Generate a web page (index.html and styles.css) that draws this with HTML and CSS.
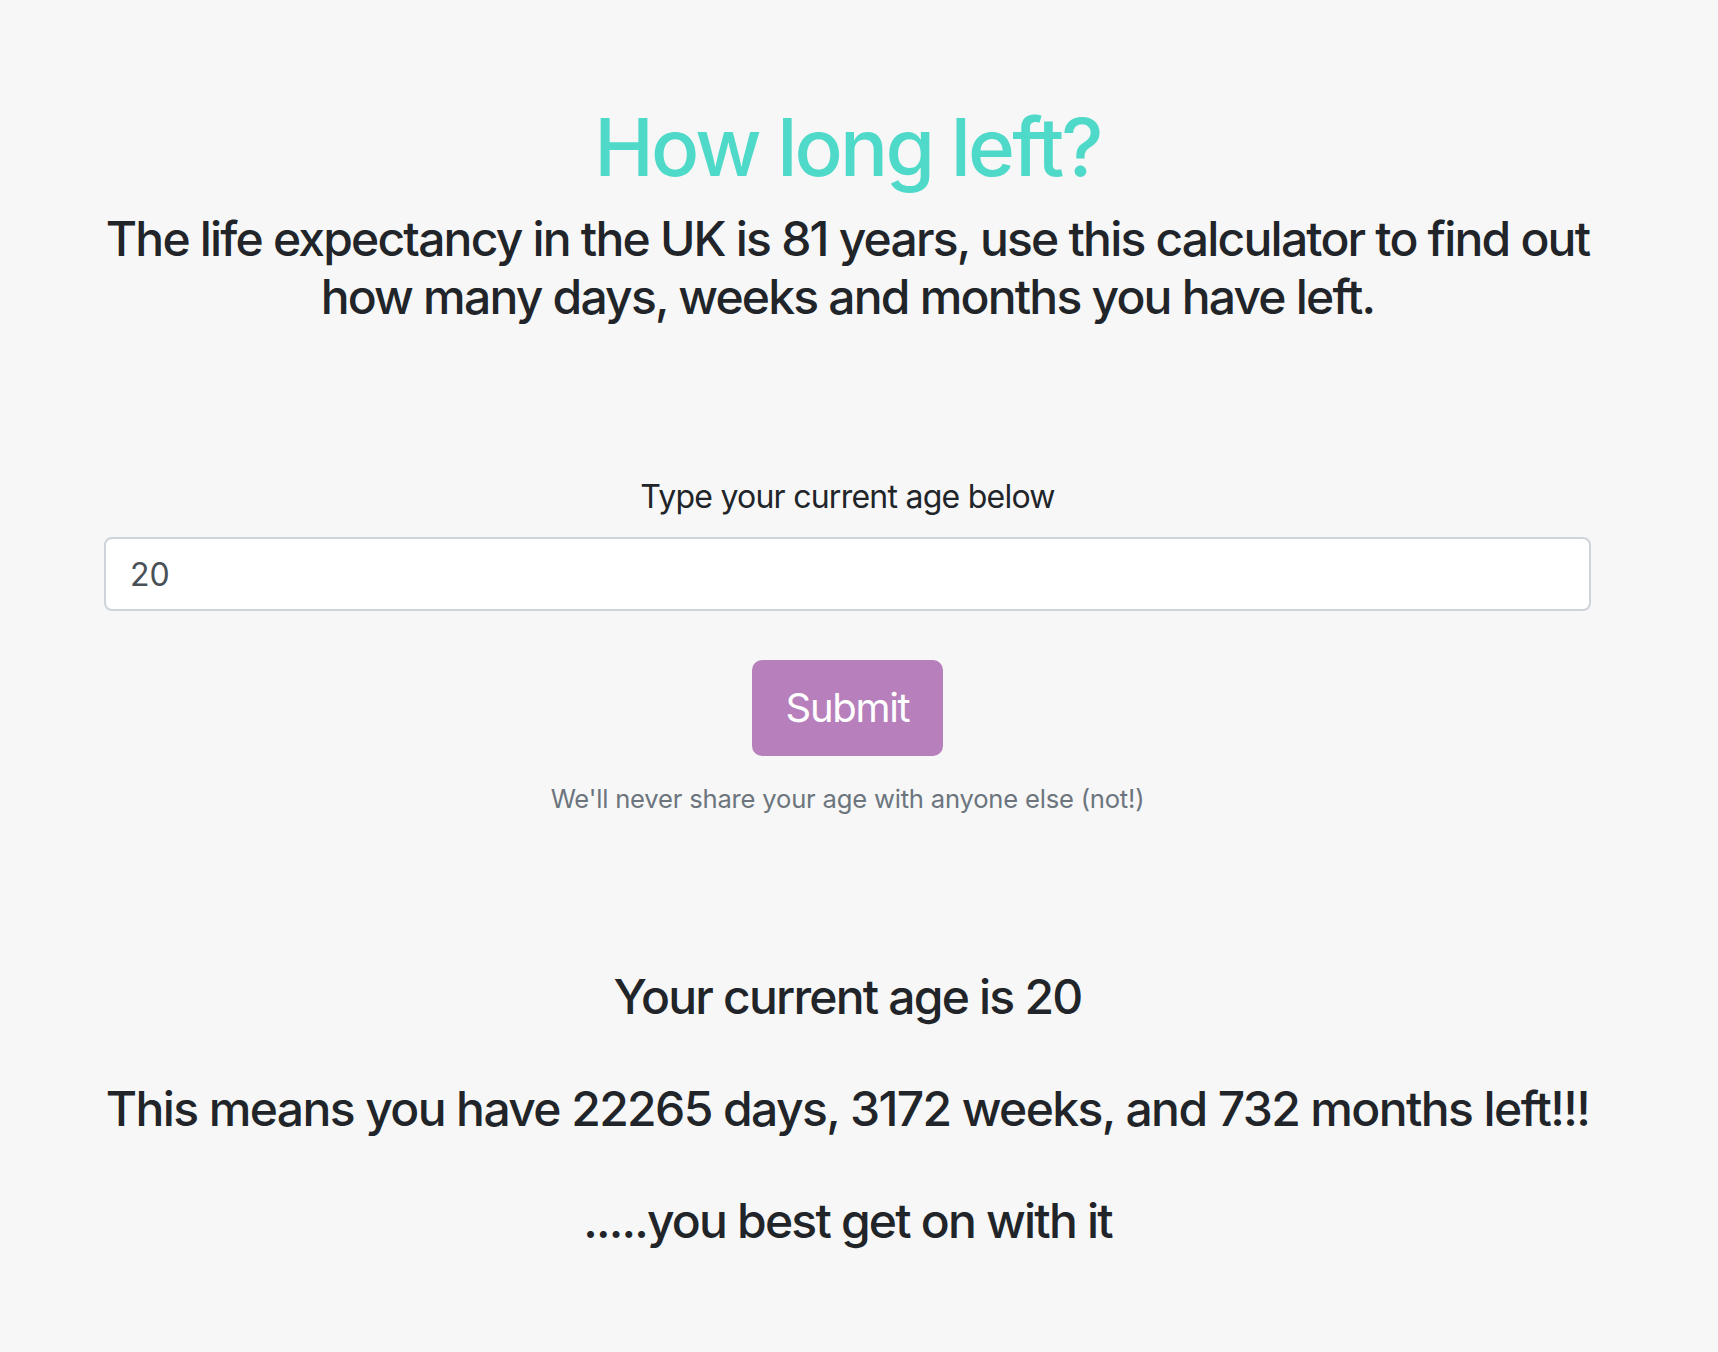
FILE: index.html
```html
<!DOCTYPE html>
<html lang="en">
<head>
<meta charset="utf-8">
<title>How long left?</title>
<link rel="stylesheet" href="styles.css">
</head>
<body>
<main class="container">
  <h1 class="title">How long left?</h1>
  <h4 class="lead-text">The life expectancy in the UK is 81 years, use this calculator to find out<br>how many days, weeks and months you have left.</h4>
  <form class="age-form">
    <label class="age-label" for="age">Type your current age below</label>
    <input class="age-input" id="age" type="text" value="20">
    <button class="submit-btn" type="button">Submit</button>
    <small class="hint">We'll never share your age with anyone else (not!)</small>
  </form>
  <section class="results">
    <h4 class="result-line">Your current age is 20</h4>
    <h4 class="result-line result-wide">This means you have 22265 days, 3172 weeks, and 732 months left!!!</h4>
    <h4 class="result-line">.....you best get on with it</h4>
  </section>
</main>
</body>
</html>
```
FILE: styles.css
```css
html, body {
  margin: 0;
  padding: 0;
  background: #f7f7f7;
}
body {
  font-family: Inter, "Noto Sans", "Liberation Sans", sans-serif;
  color: #212529;
  min-height: 1352px;
}
.container {
  width: 1487px;
  margin-left: 104px;
  padding-top: 99px;
  text-align: center;
}
.title {
  margin: 0 0 15px;
  font-size: 80px;
  line-height: 96px;
  font-weight: 500;
  letter-spacing: -2.8px;
  color: #4fd9c9;
}
.lead-text {
  margin: 0;
  font-size: 48px;
  line-height: 57.6px;
  font-weight: 500;
  letter-spacing: -1.8px;
  white-space: nowrap;
}
.age-form {
  display: flex;
  flex-direction: column;
  align-items: center;
  padding-top: 148px;
}
.age-label {
  font-size: 32px;
  line-height: 48px;
  letter-spacing: -0.75px;
  margin-bottom: 16px;
}
.age-input {
  box-sizing: border-box;
  width: 100%;
  height: 74px;
  padding: 12px 24px;
  font-family: inherit;
  font-size: 32px;
  line-height: 48px;
  color: #495057;
  background: #fff;
  border: 2px solid #ced4da;
  border-radius: 8px;
  outline: none;
}
.submit-btn {
  margin-top: 49px;
  box-sizing: border-box;
  height: 96px;
  padding: 16px 32px;
  font-family: inherit;
  font-size: 40px;
  line-height: 60px;
  font-weight: 400;
  letter-spacing: -1.3px;
  color: #fff;
  background: #b77fbc;
  border: 2px solid #b77fbc;
  border-radius: 10px;
}
.hint {
  margin-top: 23.5px;
  font-size: 25.6px;
  line-height: 38.4px;
  letter-spacing: -0.2px;
  color: #6c757d;
}
.results {
  padding-top: 150px;
  display: flex;
  flex-direction: column;
  gap: 54.4px;
}
.result-line {
  margin: 0;
  font-size: 48px;
  line-height: 57.6px;
  font-weight: 500;
  letter-spacing: -1.8px;
  white-space: nowrap;
}
.result-wide {
  letter-spacing: -1.6px;
}
```
